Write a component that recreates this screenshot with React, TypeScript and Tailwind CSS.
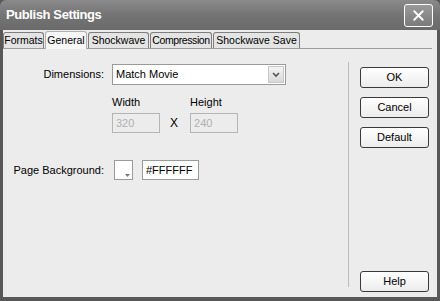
import { X } from 'lucide-react';

const tabs = [
  { label: 'Formats', w: 'w-[41px]' },
  { label: 'General', w: 'w-[42px]' },
  { label: 'Shockwave', w: 'w-[61px]' },
  { label: 'Compression', w: 'w-[62px] tracking-[-0.4px]' },
  { label: 'Shockwave Save', w: 'w-[87px]' },
];

function Button({ label }: { label: string }) {
  return (
    <button className="w-[69px] h-[21px] bg-gradient-to-b from-white to-[#ececec] border border-[#3a3a3a] rounded-[3px] text-[11px] text-black leading-none">
      {label}
    </button>
  );
}

function NumberField({ value }: { value: string }) {
  return (
    <div className="w-[48px] h-[20px] bg-[#ececec] border border-[#b5b5b5] px-[3px] flex items-center text-[11px] text-[#b0b0b0]">
      {value}
    </div>
  );
}

export default function App() {
  return (
    <div
      className="w-[440px] h-[301px] bg-[#585858] flex flex-col px-[3px] pb-[4px] overflow-hidden"
      style={{ fontFamily: '"Liberation Sans", Arial, sans-serif' }}
    >
      {/* title bar */}
      <div className="h-[30px] -mx-[3px] pl-[6px] pr-[7px] flex items-center justify-between bg-gradient-to-b from-[#8a8a8a] via-[#747474] to-[#6a6a6a] rounded-t-[6px]">
        <span className="text-white font-bold text-[13px] tracking-[-0.4px]">Publish Settings</span>
        <div className="w-[29px] h-[23px] border border-white rounded-[3px] bg-gradient-to-b from-[#9a9a9a] to-[#7a7a7a] flex items-center justify-center">
          <X size={17} strokeWidth={2.6} className="text-white" />
        </div>
      </div>

      <div className="flex-1 bg-[#ececec] flex flex-col">
        {/* tabs */}
        <div className="flex items-end h-[18px] mt-[1px] border-b border-[#9c9c9c] mr-[5px]">
          {tabs.map((t) => {
            const active = t.label === 'General';
            return (
              <div
                key={t.label}
                className={
                  (active
                    ? 'h-[18px] bg-[#f6f6f6] border border-b-0 border-[#b0b0b0] leading-[17px] -mb-px'
                    : 'h-[16px] bg-[#e4e4e4] border border-b-0 border-[#7e7e7e] leading-[15px]') +
                  ' ' +
                  t.w +
                  ' mr-px rounded-t-[3px] text-[10.5px] text-black text-center whitespace-nowrap'
                }
              >
                {t.label}
              </div>
            );
          })}
        </div>

        <div className="flex flex-1">
          {/* left pane */}
          <div className="w-[345px] pt-[15px]">
            <div className="flex items-center">
              <span className="w-[101px] text-right text-[11px] text-black">Dimensions:</span>
              <div className="ml-[8px] w-[174px] h-[21px] bg-white border border-[#9a9a9a] flex items-center justify-between pl-[3px] pr-[1px]">
                <span className="text-[11px] text-black">Match Movie</span>
                <div className="w-[16px] h-[17px] bg-gradient-to-b from-[#f4f4f4] to-[#d8d8d8] border border-[#c8c8c8] flex items-center justify-center">
                  <svg width="8" height="6" viewBox="0 0 8 6">
                    <path d="M1 1 L4 4 L7 1" stroke="#555" strokeWidth="1.6" fill="none" />
                  </svg>
                </div>
              </div>
            </div>

            <div className="ml-[109px] mt-[11px] flex">
              <div className="flex flex-col">
                <span className="text-[11px] text-black leading-[13px]">Width</span>
                <div className="mt-[4px]">
                  <NumberField value="320" />
                </div>
              </div>
              <span className="self-end h-[20px] flex items-center ml-[10px] mr-[12px] text-[12px] text-black">X</span>
              <div className="flex flex-col">
                <span className="text-[11px] text-black leading-[13px]">Height</span>
                <div className="mt-[4px]">
                  <NumberField value="240" />
                </div>
              </div>
            </div>

            <div className="mt-[27px] flex items-center">
              <span className="w-[101px] text-right text-[11px] text-black">Page Background:</span>
              <div className="ml-[10px] w-[19px] h-[20px] bg-white border border-[#9a9a9a] relative">
                <svg className="absolute right-[2px] bottom-[2px]" width="5" height="3" viewBox="0 0 5 3">
                  <path d="M0 0 L5 0 L2.5 3 Z" fill="#777" />
                </svg>
              </div>
              <div className="ml-[9px] w-[57px] h-[20px] bg-white border border-[#9a9a9a] flex items-center px-[3px] text-[11px] text-black">
                #FFFFFF
              </div>
            </div>
          </div>

          {/* separator */}
          <div className="w-px bg-[#bcbcbc] mt-[13px] mb-[10px]" />

          {/* buttons */}
          <div className="flex-1 flex flex-col pl-[11px] pt-[18px] pb-[5px]">
            <div className="flex flex-col gap-[9px]">
              <Button label="OK" />
              <Button label="Cancel" />
              <Button label="Default" />
            </div>
            <div className="mt-auto">
              <Button label="Help" />
            </div>
          </div>
        </div>
      </div>
    </div>
  );
}
